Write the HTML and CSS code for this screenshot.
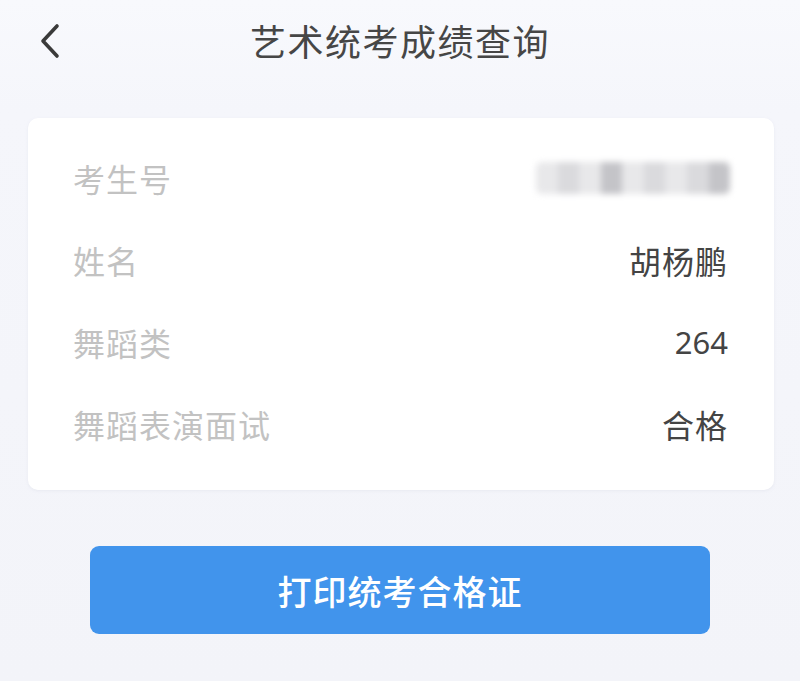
FILE: index.html
```html
<!DOCTYPE html>
<html lang="zh">
<head>
<meta charset="utf-8">
<title>艺术统考成绩查询</title>
<link rel="stylesheet" href="styles.css">
</head>
<body>
<div class="page">
  <header class="header">
    <span class="back">
      <svg width="24" height="36" viewBox="0 0 24 36"><path d="M19 3 L5 18 L19 33" fill="none" stroke="#3a3a3a" stroke-width="3.6" stroke-linecap="round" stroke-linejoin="round"/></svg>
    </span>
    <h1 class="title">艺术统考成绩查询</h1>
  </header>
  <section class="card">
    <div class="row">
      <span class="label">考生号</span>
      <span class="mosaic">
        <i class="m1"></i><i class="m2"></i><i class="m1"></i><i class="m3"></i><i class="m1"></i><i class="m2"></i><i class="m1"></i><i class="m2"></i><i class="m3"></i>
      </span>
    </div>
    <div class="row">
      <span class="label">姓名</span>
      <span class="value">胡杨鹏</span>
    </div>
    <div class="row">
      <span class="label">舞蹈类</span>
      <span class="value num">264</span>
    </div>
    <div class="row">
      <span class="label">舞蹈表演面试</span>
      <span class="value">合格</span>
    </div>
  </section>
  <div class="actions">
    <button class="btn">打印统考合格证</button>
  </div>
</div>
</body>
</html>
```
FILE: styles.css
```css
html, body {
  margin: 0;
  padding: 0;
  background: #f4f5fa;
}
.page {
  width: 800px;
  height: 681px;
  overflow: hidden;
  font-family: "Noto Sans CJK SC", "Noto Sans", sans-serif;
  background: linear-gradient(#f8f9fd 0, #f5f6fb 110px, #f3f4f9 100%);
}
.header {
  height: 88px;
  display: flex;
  align-items: center;
  justify-content: center;
  position: relative;
  margin-bottom: 30px;
}
.back {
  position: absolute;
  left: 38px;
  top: 23px;
  display: flex;
}
.title {
  margin: 0;
  font-size: 36px;
  font-weight: 400;
  color: #464646;
  letter-spacing: 1.5px;
  line-height: 1;
  margin-top: -8px;
}
.card {
  margin: 0 26px 0 28px;
  background: #ffffff;
  border-radius: 10px;
  padding: 19px 46px 25px 45px;
  box-shadow: 0 1px 3px rgba(200, 204, 220, 0.25);
}
.row {
  height: 82px;
  display: flex;
  align-items: center;
  justify-content: space-between;
}
.label {
  font-size: 32px;
  letter-spacing: 1px;
  color: #c2c2c2;
}
.value {
  font-size: 32px;
  letter-spacing: 1px;
  color: #444444;
}
.value.num {
  font-family: "Noto Sans", "DejaVu Sans", sans-serif;
  letter-spacing: 0;
  font-size: 31px;
}
.mosaic {
  display: flex;
  width: 194px;
  height: 32px;
  margin-right: -2px;
  filter: blur(3px);
  border-radius: 6px;
  overflow: hidden;
}
.mosaic i {
  flex: 1;
  display: block;
}
.m1 { background: #e8e8ea; }
.m2 { background: #dadadd; }
.m3 { background: #c4c4c8; }
.actions {
  display: flex;
  justify-content: center;
  padding-top: 56px;
}
.btn {
  width: 620px;
  height: 88px;
  border: none;
  border-radius: 9px;
  background: #4194ec;
  color: #ffffff;
  font-family: "Noto Sans CJK SC", "Noto Sans", sans-serif;
  font-size: 34px;
  font-weight: 500;
  letter-spacing: 1px;
  padding: 0;
}
```
